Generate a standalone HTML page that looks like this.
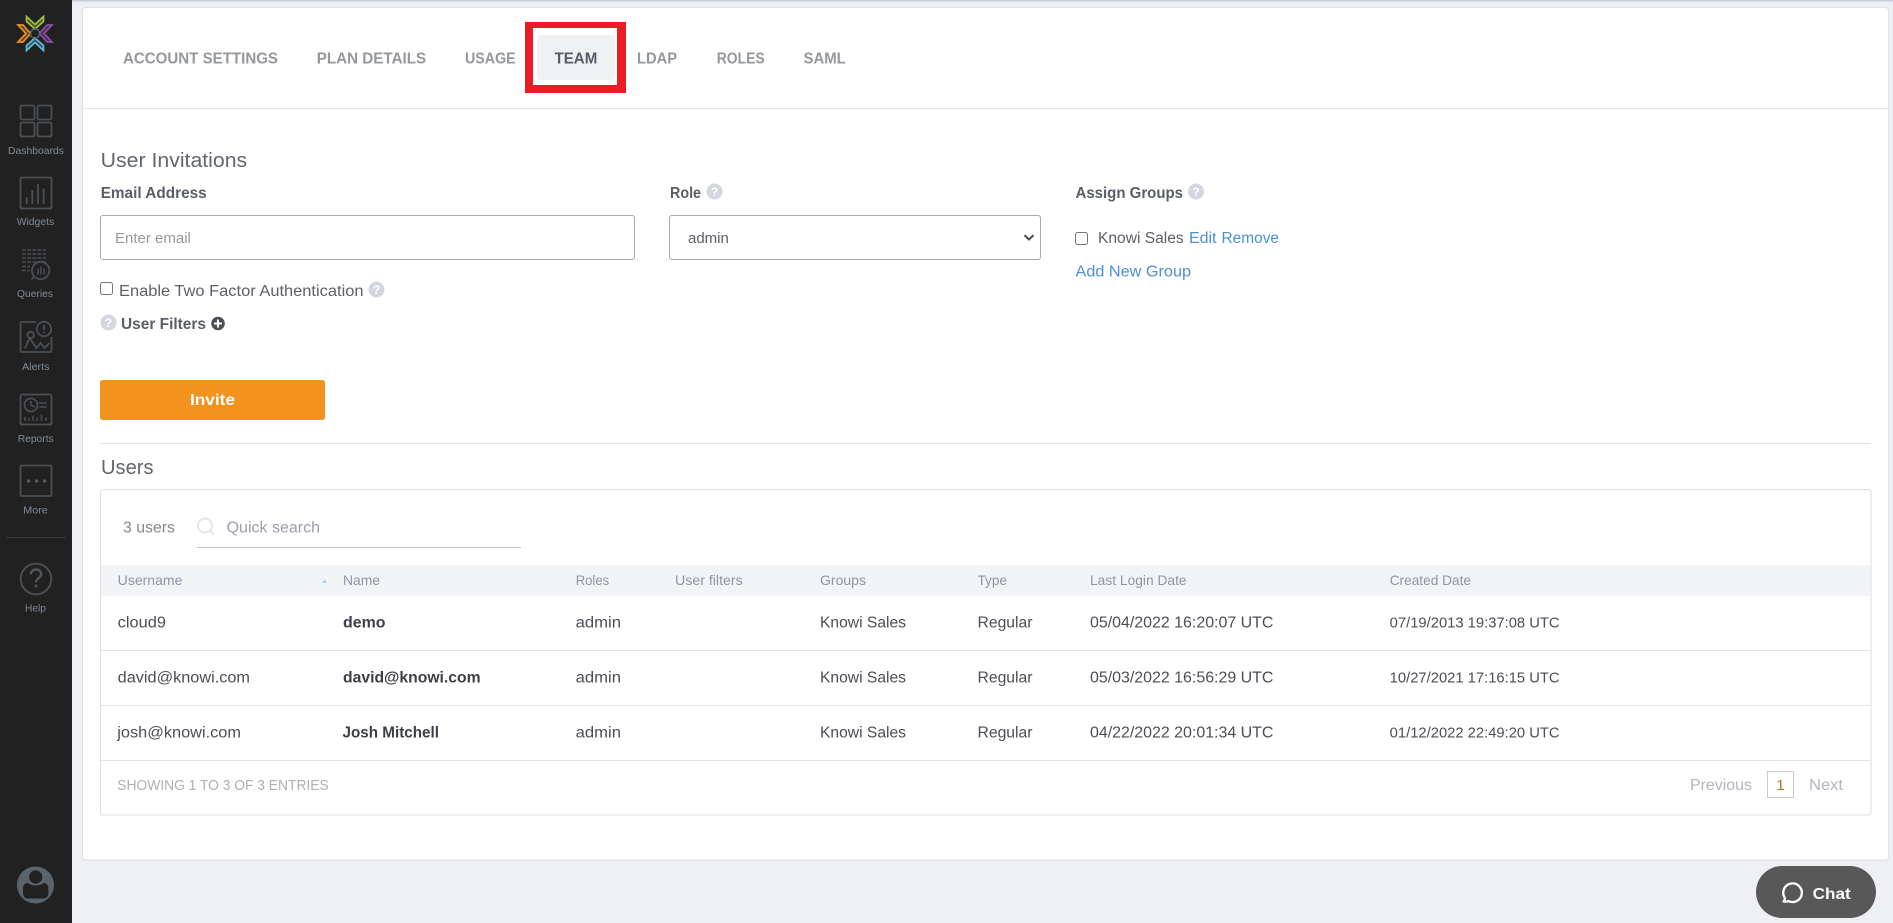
<!DOCTYPE html>
<html lang="en">
<head>
<meta charset="utf-8">
<title>Team</title>
<style>
html,body{margin:0;padding:0;width:1893px;height:923px;overflow:hidden;background:#eff0f3}
body{position:relative;font-family:"Liberation Sans",sans-serif}
svg.page{position:absolute;left:0;top:0}
svg text{font-family:"Liberation Sans",sans-serif}
.s{font-size:10.5px;fill:#7f8b97;text-anchor:start}
.tab{font-size:15.5px;font-weight:700;fill:#94979b}
.h{font-size:20px;fill:#62666d}
.l{font-size:15.5px;font-weight:700;fill:#5a5e66}
.b{font-size:15.5px;fill:#5d6066}
.a{font-size:15.5px;fill:#4d8fd6}
.th{font-size:14px;fill:#8d96a5}
.td{font-size:15.5px;fill:#4b4e54}
.tn{font-size:15.5px;font-weight:700;fill:#3c3f46}
.td2{font-size:14.5px;fill:#4b4e54}
.g{font-size:14.5px;fill:#aeb0b4}
.q{font-size:12px;font-weight:700;fill:#fff;text-anchor:middle}
.ic{fill:none;stroke:#4a4f54;stroke-width:1.8}
input.e,select.e{position:absolute;box-sizing:border-box;height:45px;top:215px;border:1px solid #a9a9a9;border-radius:3px;background:#fff;font:15px "Liberation Sans",sans-serif;color:#5d6066;outline:0}
input.e{left:100px;width:535px;padding:2px 14px 0}
input.e::placeholder{color:#9a9a9a;opacity:1}
select.e{left:669px;width:372px;padding:2px 18px 0;appearance:none;-webkit-appearance:none}
input.c{position:absolute;margin:0;width:13px;height:13px}
svg.chev{position:absolute;left:1022px;top:232px}
</style>
</head>
<body>
<svg class="page" width="1893" height="923" viewBox="0 0 1893 923" xmlns="http://www.w3.org/2000/svg">
<!-- top band / sidebar -->
<rect x="72" y="0" width="1821" height="1.5" fill="#c9d0da"/>
<rect x="0" y="0" width="72" height="923" fill="#212121"/>

<!-- logo -->
<g stroke-width="1.7" stroke-linejoin="miter">
<polygon points="26.5,16.500 35,24.500 43.500,16.500 43.500,21.500 35,29 26.500,21.500" stroke="#a3c03c" fill="#a3c03c" fill-opacity=".35"/>
<polygon points="26.5,16.500 35,24.500 43.500,16.500 43.500,21.500 35,29 26.500,21.500" stroke="#8d4ea6" fill="#8d4ea6" fill-opacity=".35" transform="rotate(90 35 33.5)"/>
<polygon points="26.5,16.500 35,24.500 43.500,16.500 43.500,21.500 35,29 26.500,21.500" stroke="#62bada" fill="#62bada" fill-opacity=".35" transform="rotate(180 35 33.5)"/>
<polygon points="26.5,16.500 35,24.500 43.500,16.500 43.500,21.500 35,29 26.500,21.500" stroke="#ef8d22" fill="#ef8d22" fill-opacity=".35" transform="rotate(270 35 33.5)"/>
<circle cx="35" cy="33.5" r="4.6" fill="none" stroke="#4c6f86" stroke-width="1.8" stroke-dasharray="2 .6"/>
</g>

<!-- Dashboards -->
<g class="ic">
<rect x="20.5" y="105.5" width="14" height="14" rx="1.5"/>
<rect x="37.5" y="105.5" width="14" height="14" rx="1.5"/>
<rect x="20.5" y="122.5" width="14" height="14" rx="1.5"/>
<rect x="37.5" y="122.5" width="14" height="14" rx="1.5"/>
</g>
<text class="s" x="8" y="154" textLength="56" lengthAdjust="spacingAndGlyphs">Dashboards</text>

<!-- Widgets -->
<g class="ic">
<rect x="20.5" y="177.5" width="31" height="31" rx="1.5"/>
<path d="M26.7 204v-7M32.3 204v-14M38 204v-20M43.7 204v-15.5"/>
</g>
<text class="s" x="16.7" y="225" textLength="37.5" lengthAdjust="spacingAndGlyphs">Widgets</text>

<!-- Queries -->
<g fill="none" stroke="#4a4f54" stroke-width="1.5">
<path d="M22 250h24M22 254h24M22 258h24M22 262h24" stroke-dasharray="3.8 1.4"/>
<path d="M22 266.5h8M22 270.5h8"  stroke-dasharray="3.8 1.4"/>
<circle cx="40.7" cy="270.5" r="8.7" stroke-width="1.8"/>
<path d="M34.2 276.5l-2.7 2.7" stroke-width="1.8"/>
<path d="M38 274.5v-6M41 274.5v-8M44 274.5v-6"/>
</g>
<text class="s" x="17" y="297" textLength="36" lengthAdjust="spacingAndGlyphs">Queries</text>

<!-- Alerts -->
<g class="ic">
<path d="M36 322H22a1.5 1.5 0 0 0-1.5 1.5v27a1.5 1.5 0 0 0 1.5 1.5h28a1.5 1.5 0 0 0 1.5-1.5V337"/>
<circle cx="44" cy="329" r="7.2"/>
<path d="M44 325v5M44 331.5v1.6" stroke-width="1.9"/>
<circle cx="30.7" cy="335" r="3.2"/>
<path d="M25 348.5l4.5-10.500 7 10 4-5 4 5 5-5"/>
</g>
<text class="s" x="22" y="370" textLength="27.5" lengthAdjust="spacingAndGlyphs">Alerts</text>

<!-- Reports -->
<g class="ic">
<rect x="20.5" y="394.5" width="31" height="30" rx="1.5"/>
<circle cx="31" cy="405" r="6.5"/>
<path d="M31 401v4l3.5 2M39.3 403h7.5M39.3 407h7.5" stroke-width="1.6"/>
<path d="M25 420.7v-4M29 420.7v-2.5M33 420.7v-5M37 420.7v-3M41.5 420.7v-6M46 420.7v-3.5" stroke-width="1.6"/>
</g>
<text class="s" x="17.7" y="442" textLength="36" lengthAdjust="spacingAndGlyphs">Reports</text>

<!-- More -->
<g class="ic">
<rect x="20.5" y="465.5" width="31" height="30.5" rx="1.5"/>
</g>
<g fill="#5a5f64"><circle cx="28.7" cy="481" r="1.6"/><circle cx="36.7" cy="481" r="1.6"/><circle cx="44.7" cy="481" r="1.6"/></g>
<text class="s" x="23.3" y="513.7" textLength="24.5" lengthAdjust="spacingAndGlyphs">More</text>

<rect x="6" y="537" width="60" height="1" fill="#3a3a3a"/>

<!-- Help -->
<circle cx="36" cy="579" r="15.3" fill="none" stroke="#4a4f54" stroke-width="1.9"/>
<path d="M30.8 574.5c0-3 2.2-5 5.2-5s5.2 2 5.2 4.800c0 3.600-5.200 4-5.200 8" fill="none" stroke="#4f5459" stroke-width="2.5"/>
<rect x="34.7" y="584.500" width="2.600" height="2.800" fill="#4f5459"/>
<text class="s" x="25" y="611.7" textLength="21" lengthAdjust="spacingAndGlyphs">Help</text>

<!-- Avatar -->
<circle cx="35.5" cy="885" r="18.5" fill="#5a646d"/>
<circle cx="35.7" cy="877" r="6.6" fill="#212121"/>
<path d="M23 893v-4.500c0-3.200 1.800-5.500 5-5.500 2 1.800 4.500 2.500 7.700 2.500s5.700-.7 7.700-2.500c3.200 0 5 2.300 5 5.500v4.500c0 3.300-2 5.500-5 5.500H28c-3 0-5-2.200-5-5.500z" fill="#212121"/>

<!-- main card -->
<rect x="82.5" y="7.5" width="1806" height="852.5" rx="3" fill="#fff" stroke="#dfe1e6"/>
<rect x="83" y="108" width="1805" height="1" fill="#e1e3e8"/>

<!-- Tabs -->
<rect x="537" y="35" width="78" height="45" rx="4" fill="#f0f1f3"/>
<text class="tab" x="123" y="63.5" textLength="155" lengthAdjust="spacingAndGlyphs">ACCOUNT SETTINGS</text>
<text class="tab" x="316.7" y="63.5" textLength="109.5" lengthAdjust="spacingAndGlyphs">PLAN DETAILS</text>
<text class="tab" x="465" y="63.5" textLength="50.7" lengthAdjust="spacingAndGlyphs">USAGE</text>
<text class="tab" x="554.5" y="63.5" textLength="42.8" lengthAdjust="spacingAndGlyphs" style="fill:#565b66">TEAM</text>
<text class="tab" x="637" y="63.5" textLength="40" lengthAdjust="spacingAndGlyphs">LDAP</text>
<text class="tab" x="716.7" y="63.5" textLength="48" lengthAdjust="spacingAndGlyphs">ROLES</text>
<text class="tab" x="803.5" y="63.5" textLength="42.3" lengthAdjust="spacingAndGlyphs">SAML</text>
<path fill-rule="evenodd" d="M525 22H626V93H525zM533 28V85H617V28z" fill="#ed1c24"/>

<!-- User invitations -->
<text class="h" x="100.7" y="167" textLength="146.5" lengthAdjust="spacingAndGlyphs">User Invitations</text>
<text class="l" x="100.7" y="198" textLength="106" lengthAdjust="spacingAndGlyphs">Email Address</text>
<text class="l" x="670" y="198" textLength="31" lengthAdjust="spacingAndGlyphs">Role</text>
<circle cx="714.5" cy="191.5" r="8" fill="#d5d7e0"/><text class="q" x="714.5" y="196">?</text>
<text class="l" x="1075.5" y="198" textLength="107.5" lengthAdjust="spacingAndGlyphs">Assign Groups</text>
<circle cx="1196" cy="191.5" r="8" fill="#d5d7e0"/><text class="q" x="1196" y="196">?</text>

<text class="b" x="119" y="296" textLength="244.5" lengthAdjust="spacingAndGlyphs">Enable Two Factor Authentication</text>
<circle cx="376.5" cy="289.5" r="8" fill="#d5d7e0"/><text class="q" x="376.5" y="294">?</text>

<circle cx="108.5" cy="322.5" r="8" fill="#d5d7e0"/><text class="q" x="108.5" y="327">?</text>
<text class="l" x="121" y="329" textLength="85" lengthAdjust="spacingAndGlyphs">User Filters</text>
<circle cx="218" cy="323.5" r="6.8" fill="#4a4f58"/>
<path d="M218 319.5v8M214 323.5h8" stroke="#fff" stroke-width="2"/>

<text class="b" x="1098" y="243" textLength="85.7" lengthAdjust="spacingAndGlyphs">Knowi Sales</text>
<text class="a" x="1189" y="243" textLength="27.5" lengthAdjust="spacingAndGlyphs">Edit</text>
<text class="a" x="1221.5" y="243" textLength="57.5" lengthAdjust="spacingAndGlyphs">Remove</text>
<text class="a" x="1075.5" y="276.7" textLength="115.5" lengthAdjust="spacingAndGlyphs">Add New Group</text>

<!-- Invite -->
<rect x="100" y="380" width="225" height="40" rx="2.5" fill="#f2931e"/>
<text x="190" y="405" font-size="16" font-weight="700" fill="#fff" textLength="45" lengthAdjust="spacingAndGlyphs">Invite</text>

<rect x="100" y="443" width="1771" height="1" fill="#e3e4e8"/>

<!-- Users -->
<text class="h" x="101" y="474" textLength="52.5" lengthAdjust="spacingAndGlyphs">Users</text>
<rect x="100.5" y="489.5" width="1770.5" height="325.5" rx="3" fill="#fff" stroke="#dddfe4"/>
<text x="123" y="532.7" font-size="15.5" fill="#84878d" textLength="52" lengthAdjust="spacingAndGlyphs">3 users</text>
<circle cx="205" cy="525.5" r="7" fill="none" stroke="#e0e2e6" stroke-width="1.7"/>
<path d="M210 530.5l4 4" stroke="#e0e2e6" stroke-width="1.7"/>
<text x="226.6" y="532.7" font-size="15.5" fill="#9a9fa9" textLength="93.4" lengthAdjust="spacingAndGlyphs">Quick search</text>
<rect x="197" y="547" width="324" height="1" fill="#bfc2c8"/>

<rect x="101" y="565" width="1769.5" height="31" fill="#f2f4f7"/>
<text class="th" x="117.7" y="585" textLength="64.7" lengthAdjust="spacingAndGlyphs">Username</text>
<path d="M322 583l2.5-4 2.5 4z" fill="#a9d8ef"/>
<text class="th" x="343" y="585" textLength="37" lengthAdjust="spacingAndGlyphs">Name</text>
<text class="th" x="575.7" y="585" textLength="33.5" lengthAdjust="spacingAndGlyphs">Roles</text>
<text class="th" x="675" y="585" textLength="67.7" lengthAdjust="spacingAndGlyphs">User filters</text>
<text class="th" x="820" y="585" textLength="46" lengthAdjust="spacingAndGlyphs">Groups</text>
<text class="th" x="977.5" y="585" textLength="29.5" lengthAdjust="spacingAndGlyphs">Type</text>
<text class="th" x="1090" y="585" textLength="96.6" lengthAdjust="spacingAndGlyphs">Last Login Date</text>
<text class="th" x="1389.7" y="585" textLength="81.3" lengthAdjust="spacingAndGlyphs">Created Date</text>

<!-- rows -->
<text class="td" x="117.7" y="627.7" textLength="48.3" lengthAdjust="spacingAndGlyphs">cloud9</text>
<text class="tn" x="343" y="627.7" textLength="42.5" lengthAdjust="spacingAndGlyphs">demo</text>
<text class="td" x="575.7" y="627.7" textLength="45.3" lengthAdjust="spacingAndGlyphs">admin</text>
<text class="td" x="820" y="627.7" textLength="86" lengthAdjust="spacingAndGlyphs">Knowi Sales</text>
<text class="td" x="977.5" y="627.7" textLength="55" lengthAdjust="spacingAndGlyphs">Regular</text>
<text class="td" x="1090" y="627.7" textLength="183.4" lengthAdjust="spacingAndGlyphs">05/04/2022 16:20:07 UTC</text>
<text class="td2" x="1389.7" y="627.7" textLength="169.9" lengthAdjust="spacingAndGlyphs">07/19/2013 19:37:08 UTC</text>
<rect x="101" y="650" width="1769.5" height="1" fill="#e2e5ea"/>

<text class="td" x="117.7" y="682.7" textLength="132.3" lengthAdjust="spacingAndGlyphs">david@knowi.com</text>
<text class="tn" x="343" y="682.7" textLength="137.6" lengthAdjust="spacingAndGlyphs">david@knowi.com</text>
<text class="td" x="575.7" y="682.7" textLength="45.3" lengthAdjust="spacingAndGlyphs">admin</text>
<text class="td" x="820" y="682.7" textLength="86" lengthAdjust="spacingAndGlyphs">Knowi Sales</text>
<text class="td" x="977.5" y="682.7" textLength="55" lengthAdjust="spacingAndGlyphs">Regular</text>
<text class="td" x="1090" y="682.7" textLength="183.4" lengthAdjust="spacingAndGlyphs">05/03/2022 16:56:29 UTC</text>
<text class="td2" x="1389.7" y="682.7" textLength="169.9" lengthAdjust="spacingAndGlyphs">10/27/2021 17:16:15 UTC</text>
<rect x="101" y="705" width="1769.5" height="1" fill="#e2e5ea"/>

<text class="td" x="117.3" y="737.7" textLength="123.7" lengthAdjust="spacingAndGlyphs">josh@knowi.com</text>
<text class="tn" x="342.5" y="737.7" textLength="96.5" lengthAdjust="spacingAndGlyphs">Josh Mitchell</text>
<text class="td" x="575.7" y="737.7" textLength="45.3" lengthAdjust="spacingAndGlyphs">admin</text>
<text class="td" x="820" y="737.7" textLength="86" lengthAdjust="spacingAndGlyphs">Knowi Sales</text>
<text class="td" x="977.5" y="737.7" textLength="55" lengthAdjust="spacingAndGlyphs">Regular</text>
<text class="td" x="1090" y="737.7" textLength="183.4" lengthAdjust="spacingAndGlyphs">04/22/2022 20:01:34 UTC</text>
<text class="td2" x="1389.7" y="737.7" textLength="169.9" lengthAdjust="spacingAndGlyphs">01/12/2022 22:49:20 UTC</text>
<rect x="101" y="760" width="1769.5" height="1" fill="#e2e5ea"/>

<!-- footer -->
<text class="g" x="117.3" y="790" textLength="211.4" lengthAdjust="spacingAndGlyphs">SHOWING 1 TO 3 OF 3 ENTRIES</text>
<text x="1690" y="790" font-size="15.5" fill="#b3b6bc" textLength="62" lengthAdjust="spacingAndGlyphs">Previous</text>
<rect x="1767.5" y="771.5" width="26" height="26" fill="#fff" stroke="#c9cacd"/>
<text x="1780.5" y="790" font-size="15" fill="#a3762e" text-anchor="middle">1</text>
<text x="1809" y="790" font-size="15.5" fill="#b3b6bc" textLength="34" lengthAdjust="spacingAndGlyphs">Next</text>

<!-- Chat -->
<rect x="1756" y="866" width="120" height="52" rx="26" fill="#585858"/>
<path d="M1783.5 901.5c1.2-1 1.5-2.5 1.2-3.8a9.3 9.3 0 1 1 3.8 3.4c-1.5.6-3.2.8-5 .4z" fill="none" stroke="#fff" stroke-width="2.3" stroke-linejoin="round"/>
<text x="1812.7" y="899" font-size="16" font-weight="700" fill="#fff" textLength="38" lengthAdjust="spacingAndGlyphs">Chat</text>
</svg>

<input class="e" type="text" placeholder="Enter email">
<select class="e"><option>admin</option></select>
<svg class="chev" width="14" height="10" viewBox="0 0 14 10" xmlns="http://www.w3.org/2000/svg"><path d="M2.5 3.2l4.500 4.300 4.500-4.300" fill="none" stroke="#4a4a4a" stroke-width="2"/></svg>
<input class="c" type="checkbox" style="left:100px;top:282px">
<input class="c" type="checkbox" style="left:1075px;top:232px">
</body>
</html>
